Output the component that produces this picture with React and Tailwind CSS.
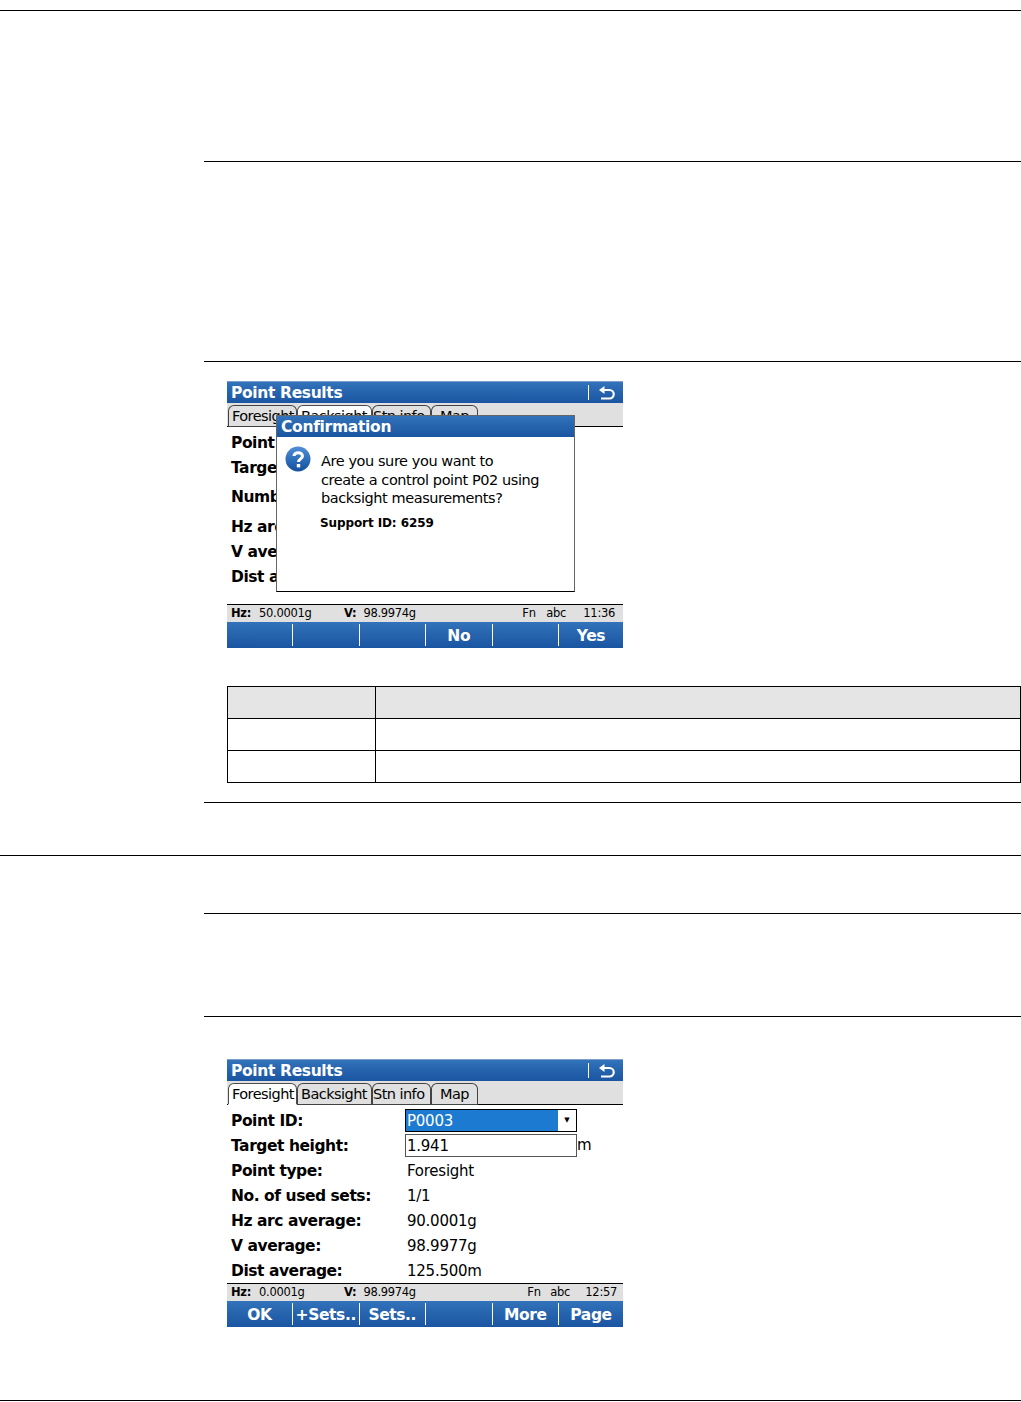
import React from 'react';

const blue = 'bg-gradient-to-b from-[#3273bb] via-[#2663ad] to-[#1a55a2]';

const BackIcon = () => (
  <svg width="17" height="14" viewBox="0 0 17 14" fill="none" stroke="white" strokeWidth="2.2">
    <path d="M4 4 H11.5 A4 4 0 0 1 11.5 12.5 H3" />
    <path d="M6.5 0 L1 4 L6.5 8 Z" fill="white" stroke="none" />
  </svg>
);

const QuestionIcon = () => (
  <svg width="26" height="26" viewBox="0 0 26 26">
    <defs>
      <linearGradient id="q" x1="0" y1="0" x2="0" y2="1">
        <stop offset="0" stopColor="#4f8fd6" />
        <stop offset="1" stopColor="#124f9e" />
      </linearGradient>
    </defs>
    <circle cx="13" cy="13" r="12.5" fill="url(#q)" />
    <path d="M9 10 C9 5.5 17.5 5.5 17.5 10 C17.5 13 13.5 12.8 13.5 16" fill="none" stroke="white" strokeWidth="3" />
    <rect x="11.8" y="18" width="3.4" height="3.4" fill="white" />
  </svg>
);

const TitleBar = ({ title, back }) => (
  <div className={`${blue} h-[22px] flex items-center justify-between pl-[4px] border-t border-[#7f9fc8]`}>
    <span className="text-white font-bold text-[15.5px] tracking-[-0.35px] leading-none pt-[2px]">{title}</span>
    {back && (
      <div className="flex items-center">
        <div className="w-px h-[15px] bg-white" />
        <div className="w-[34px] flex justify-center"><BackIcon /></div>
      </div>
    )}
  </div>
);

const Tabs = ({ active }) => (
  <div className="h-[24px] bg-[#e0e0e0] border-b border-black flex items-end pl-px text-[14.5px] tracking-[-0.55px] leading-none">
    {[['Foresight', 'w-[69px] pl-[3px]'], ['Backsight', 'w-[75px] pl-[3px]'], ['Stn info', 'w-[59px]'], ['Map', 'w-[47px] pl-[8px]']].map(([t, w]) => (
      <div
        key={t}
        className={`${w} h-[22px] -mb-px pt-px border border-black/70 rounded-t-[6px] flex items-center ${t === active ? 'bg-white border-b-white' : 'bg-[#e0e0e0]'}`}
      >
        {t}
      </div>
    ))}
  </div>
);

const StatusBar = ({ hz, v, time, hzWidth, fnWidth, abcWidth, right }) => (
  <div className="h-[18px] pt-px bg-[#e0e0e0] border-t border-black flex items-center pl-[4px] text-[11.5px] tracking-[-0.3px] leading-none">
    <div className={`${hzWidth} flex`}><b className="mr-[8px]">Hz:</b>{hz}</div>
    <div className="flex-1 flex"><b className="mr-[7px]">V:</b>{v}</div>
    <div className={`${fnWidth}`}>Fn</div>
    <div className={`${abcWidth}`}>abc</div>
    <div className={right}>{time}</div>
  </div>
);

const SoftKeys = ({ keys }) => (
  <div className={`${blue} h-[26px] grid grid-cols-[66px_66.5px_66.5px_66.5px_66.5px_1fr] items-center`}>
    {keys.map((k, i) => (
      <div
        key={i}
        className={`h-[22px] pt-[3px] flex items-center justify-center text-white font-bold text-[15.5px] tracking-[-0.4px] leading-none ${i < 5 ? 'border-r border-white' : ''}`}
      >
        {k}
      </div>
    ))}
  </div>
);

const Dialog = () => (
  <div className="absolute left-[49px] top-[34px] w-[299px] h-[177px] bg-white border border-[#666] border-b-black">
    <div className={`${blue} h-[21px] pt-[2px] flex items-center pl-[4px] text-white font-bold text-[15.5px] tracking-[-0.3px] leading-none`}>Confirmation</div>
    <div className="flex pl-[8px] pt-[9px]">
      <QuestionIcon />
      <div className="ml-[10px] pt-[6px]">
        <div className="text-[14.5px] tracking-[-0.42px] leading-[18.5px]">
          Are you sure you want to<br />create a control point P02 using<br />backsight measurements?
        </div>
        <div className="mt-[6px] -ml-px font-bold text-[12px] tracking-[-0.1px] leading-[18px]">Support ID: 6259</div>
      </div>
    </div>
  </div>
);

const firstRows = [
  ['Point ID:', 'h-[25px]'],
  ['Target height:', 'h-[25px]'],
  ['Number of sets:', 'h-[34px]'],
  ['Hz arc average:', 'h-[25px]'],
  ['V average:', 'h-[25px]'],
  ['Dist average:', 'h-[25px]'],
];

const secondRows = [
  ['Point type:', 'Foresight'],
  ['No. of used sets:', '1/1'],
  ['Hz arc average:', '90.0001g'],
  ['V average:', '98.9977g'],
  ['Dist average:', '125.500m'],
];

const label = 'font-bold text-[15.5px] tracking-[-0.45px] leading-none pt-[2px]';
const value = 'text-[15px] tracking-[-0.25px] leading-none';

const ScreenOne = () => (
  <div className="relative w-[396px] h-[267px] ml-[23px]">
    <TitleBar title="Point Results" back />
    <Tabs active="Backsight" />
    <div className="h-[177px] pl-[4px] pt-[3px] overflow-hidden">
      {firstRows.map(([t, h]) => (
        <div key={t} className={`${h} flex items-center ${label}`}>{t}</div>
      ))}
    </div>
    <StatusBar hz="50.0001g" v="98.9974g" time="11:36" hzWidth="w-[113px]" fnWidth="w-[24px]" abcWidth="w-[37px]" right="mr-[8px]" />
    <SoftKeys keys={['', '', '', 'No', '', 'Yes']} />
    <Dialog />
  </div>
);

const ScreenTwo = () => (
  <div className="w-[396px] h-[267px] ml-[23px]">
    <TitleBar title="Point Results" back />
    <Tabs active="Foresight" />
    <div className="h-[178px] pl-[4px] pt-[3px]">
      <div className="h-[25px] flex items-center">
        <div className={`w-[174px] ${label}`}>Point ID:</div>
        <div className="w-[172px] h-[23px] border border-black flex">
          <div className={`flex-1 bg-[#1c7bd0] text-white flex items-center pl-px pt-px ${value}`}>P0003</div>
          <div className="w-[18px] flex items-center justify-center text-[7px] leading-none">▼</div>
        </div>
      </div>
      <div className="h-[25px] flex items-center">
        <div className={`w-[174px] ${label}`}>Target height:</div>
        <div className={`w-[172px] h-[23px] border border-[#555] flex items-center pl-px pt-px ${value}`}>1.941</div>
        <span className={value}>m</span>
      </div>
      {secondRows.map(([a, b]) => (
        <div key={a} className="h-[25px] flex items-center">
          <div className={`w-[176px] ${label}`}>{a}</div>
          <div className={`${value} pt-px`}>{b}</div>
        </div>
      ))}
    </div>
    <StatusBar hz="0.0001g" v="98.9974g" time="12:57" hzWidth="w-[113px]" fnWidth="w-[23px]" abcWidth="w-[35px]" right="mr-[6px]" />
    <SoftKeys keys={['OK', '+Sets..', 'Sets..', '', 'More', 'Page']} />
  </div>
);

const Table = () => (
  <div className="ml-[23px] mt-[38px] border-t border-l border-black">
    {[0, 1, 2].map(i => (
      <div key={i} className={`h-[32px] grid grid-cols-[148px_1fr] border-b border-r border-black ${i === 0 ? 'bg-[#e5e5e5]' : ''}`}>
        <div className="border-r border-black" />
        <div />
      </div>
    ))}
  </div>
);

export default function App() {
  return (
    <div className="h-[1402px] bg-white pt-[10px] text-black overflow-hidden" style={{ fontFamily: '"DejaVu Sans", sans-serif' }}>
      <div className="h-[151px] border-t border-black" />
      <div className="h-[200px] ml-[204px] border-t border-black" />
      <div className="h-[441px] ml-[204px] border-t border-black pt-[19px]">
        <ScreenOne />
        <Table />
      </div>
      <div className="h-[53px] ml-[204px] border-t border-black" />
      <div className="h-[58px] border-t border-black" />
      <div className="h-[103px] ml-[204px] border-t border-black" />
      <div className="h-[384px] ml-[204px] border-t border-black pt-[42px]">
        <ScreenTwo />
      </div>
      <div className="border-t border-black" />
    </div>
  );
}
